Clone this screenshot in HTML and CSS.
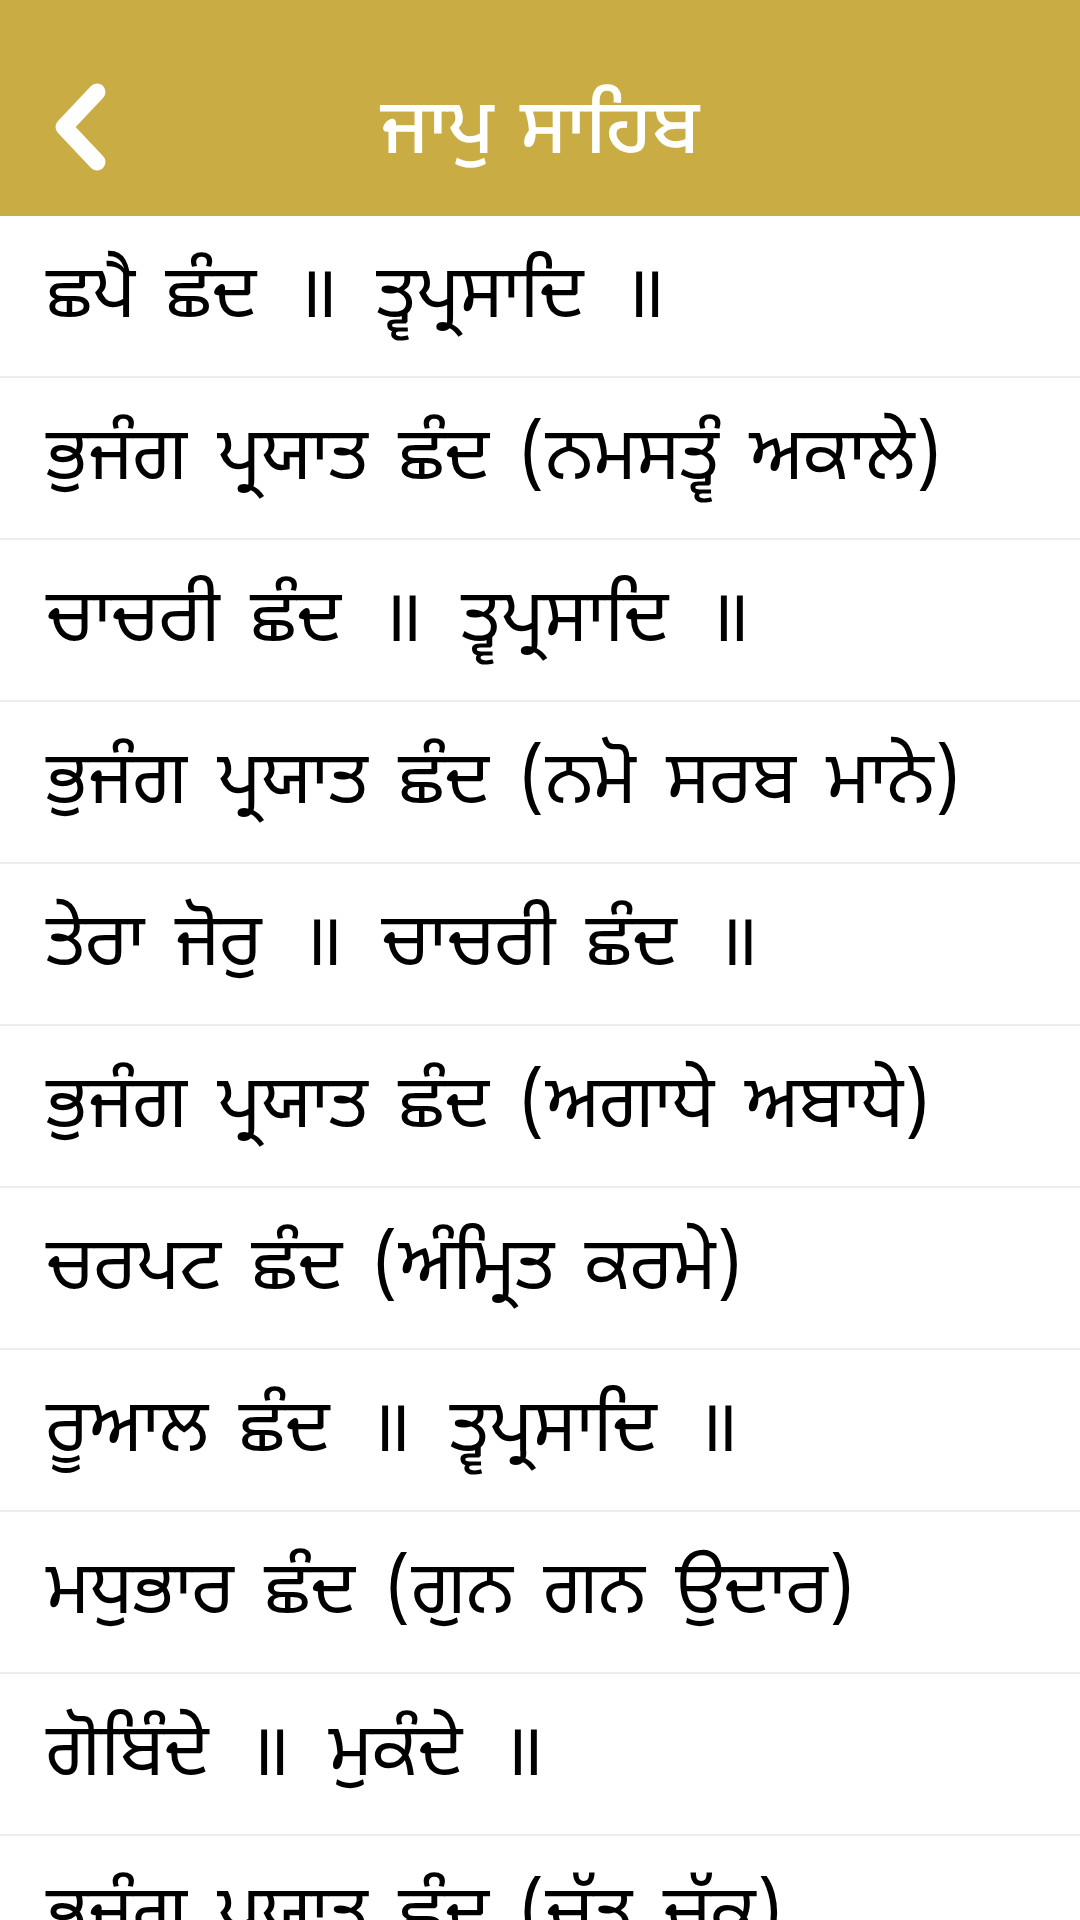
FILE: index.html
```html
<!DOCTYPE html>
<html lang="pa">
<head>
    <meta charset="UTF-8">
    <meta name="viewport" content="width=device-width, initial-scale=1.0">
    <title>ਜਾਪੁ ਸਾਹਿਬ</title>
    <link rel="stylesheet" href="styles.css">
</head>
<body>
    <div class="header">
        <div class="back-button">
            <svg width="60" height="90" viewBox="0 0 60 90">
                <path d="M47 10 L14 45 L47 80" fill="none" stroke="#fff" stroke-width="17" stroke-linejoin="round" stroke-linecap="round"/>
            </svg>
        </div>
        <h1>ਜਾਪੁ ਸਾਹਿਬ</h1>
        <div></div>
    </div>

    <div class="chapter-list">
        <div class="chapter">ਛਪੈ ਛੰਦ <span class="danda">॥</span> ਤ੍ਵਪ੍ਰਸਾਦਿ <span class="danda">॥</span></div>
        <div class="chapter">ਭੁਜੰਗ ਪ੍ਰਯਾਤ ਛੰਦ (ਨਮਸਤ੍ਵੰ ਅਕਾਲੇ)</div>
        <div class="chapter">ਚਾਚਰੀ ਛੰਦ <span class="danda">॥</span> ਤ੍ਵਪ੍ਰਸਾਦਿ <span class="danda">॥</span></div>
        <div class="chapter">ਭੁਜੰਗ ਪ੍ਰਯਾਤ ਛੰਦ (ਨਮੋ ਸਰਬ ਮਾਨੇ)</div>
        <div class="chapter">ਤੇਰਾ ਜੋਰੁ <span class="danda">॥</span> ਚਾਚਰੀ ਛੰਦ <span class="danda">॥</span></div>
        <div class="chapter">ਭੁਜੰਗ ਪ੍ਰਯਾਤ ਛੰਦ (ਅਗਾਧੇ ਅਬਾਧੇ)</div>
        <div class="chapter">ਚਰਪਟ ਛੰਦ (ਅੰਮ੍ਰਿਤ ਕਰਮੇ)</div>
        <div class="chapter">ਰੂਆਲ ਛੰਦ <span class="danda">॥</span> ਤ੍ਵਪ੍ਰਸਾਦਿ <span class="danda">॥</span></div>
        <div class="chapter">ਮਧੁਭਾਰ ਛੰਦ (ਗੁਨ ਗਨ ਉਦਾਰ)</div>
        <div class="chapter">ਗੋਬਿੰਦੇ <span class="danda">॥</span> ਮੁਕੰਦੇ <span class="danda">॥</span></div>
        <div class="chapter">ਭੁਜੰਗ ਪ੍ਰਯਾਤ ਛੰਦ (ਚੱਤ੍ਰ ਚੱਕ੍ਰ)</div>
    </div>
</body>
</html>
```

FILE: styles.css
```css
body {
    font-family: "Noto Sans Gurmukhi", "Lohit Gurmukhi", "Mukta Mahee", "Raavi", "Saab", sans-serif;
    background-color: white;
    margin: 0;
    padding: 0;
    color: #000;
    overflow: hidden;
}
.header {
    background-color: #c9ad44;
    height: 216px;
    display: grid;
    grid-template-columns: 1fr auto 1fr;
    align-items: center;
}
.back-button {
    padding-left: 50px;
    padding-top: 38px;
    display: flex;
    align-items: center;
}
h1 {
    color: white;
    margin: 0;
    padding-top: 52px;
    font-size: 77px;
    font-weight: 500;
    word-spacing: 6px;
}
.chapter {
    height: 154px;
    padding-top: 6px;
    border-bottom: 2px solid #ededed;
    display: flex;
    align-items: center;
    padding-left: 46px;
    font-size: 73px;
    word-spacing: 11px;
    white-space: pre;
}
.danda {
    margin: 0 8px;
}
```
